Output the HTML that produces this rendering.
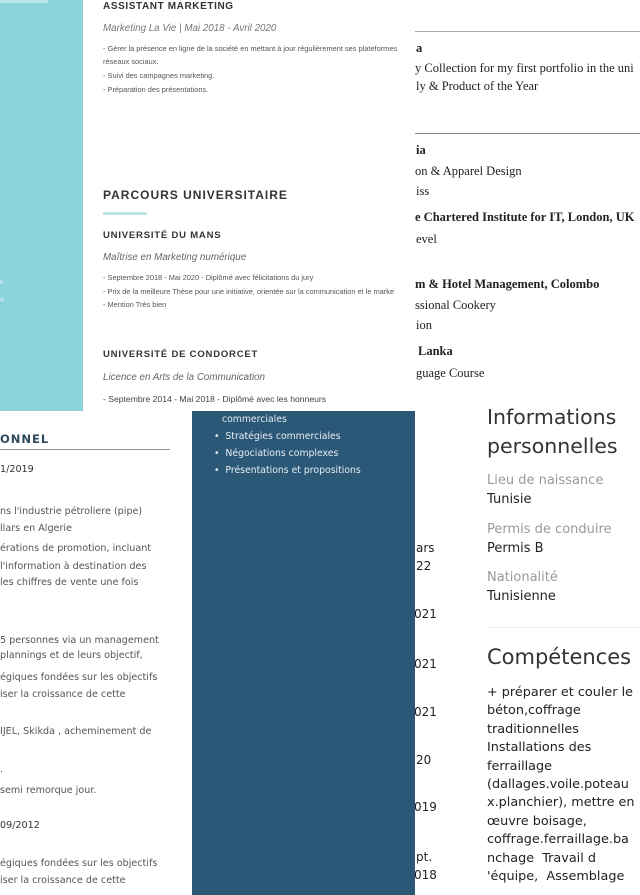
<!DOCTYPE html>
<html><head><meta charset="utf-8"><style>
*{margin:0;padding:0;box-sizing:border-box}
body{width:640px;height:895px;position:relative;overflow:hidden;background:#fff;font-family:"Liberation Sans","DejaVu Sans",sans-serif}
.t{position:absolute;white-space:nowrap;line-height:1}
.b{font-weight:bold}
.s{font-family:"Liberation Serif",serif;color:#222;font-size:12.5px}
.g{color:#555;font-size:7.4px}
.p{color:#555;font-family:"DejaVu Sans",sans-serif;font-size:9.6px}
.r{font-family:"DejaVu Sans",sans-serif}
.w{color:#e4edf3;font-size:9.3px;font-family:"DejaVu Sans",sans-serif}
</style></head><body>
<div style="position:absolute;left:0;top:0;width:83px;height:411px;background:#8cd4da"></div>
<div style="position:absolute;left:0;top:0;width:48px;height:3px;background:#b6e6ea"></div>
<div class="t" style="left:0;top:280px;font-size:6px;color:#eef">n</div>
<div class="t" style="left:0;top:297px;font-size:6px;color:#eef">a</div>

<div class="t b" style="left:103px;top:2px;font-size:10px;color:#333;letter-spacing:.6px">ASSISTANT MARKETING</div>
<div class="t" style="left:103px;top:24px;font-size:9.8px;color:#777;font-style:italic">Marketing La Vie | Mai 2018 - Avril 2020</div>
<div class="t g" style="left:103px;top:45px">- Gérer la présence en ligne de la société en mettant à jour régulièrement ses plateformes</div>
<div class="t g" style="left:103px;top:58px">réseaux sociaux.</div>
<div class="t g" style="left:103px;top:72px">- Suivi des campagnes marketing.</div>
<div class="t g" style="left:103px;top:86px">- Préparation des présentations.</div>
<div class="t b" style="left:103px;top:189px;font-size:12px;color:#333;letter-spacing:1px">PARCOURS UNIVERSITAIRE</div>
<div style="position:absolute;left:103px;top:212px;width:44px;height:3px;background:#bfe5e7"></div>
<div class="t b" style="left:103px;top:231px;font-size:9.5px;color:#333;letter-spacing:.8px">UNIVERSITÉ DU MANS</div>
<div class="t" style="left:103px;top:253px;font-size:9.8px;color:#666;font-style:italic">Maîtrise en Marketing numérique</div>
<div class="t g" style="left:103px;top:274px">- Septembre 2018 - Mai 2020 - Diplômé avec félicitations du jury</div>
<div class="t g" style="left:103px;top:288px">- Prix de la meilleure Thèse pour une initiative, orientée sur la communication et le marke</div>
<div class="t g" style="left:103px;top:301px">- Mention Très bien</div>
<div class="t b" style="left:103px;top:350px;font-size:9.5px;color:#333;letter-spacing:.8px">UNIVERSITÉ DE CONDORCET</div>
<div class="t" style="left:103px;top:373px;font-size:9.8px;color:#666;font-style:italic">Licence en Arts de la Communication</div>
<div class="t" style="left:103px;top:395px;font-size:8.6px;color:#444">- Septembre 2014 - Mai 2018 - Diplômé avec les honneurs</div>

<div style="position:absolute;left:415px;top:0;width:225px;height:411px;overflow:hidden">
<div style="position:absolute;left:0;top:31px;width:225px;height:1px;background:#aaa"></div>
<div style="position:absolute;left:0;top:133px;width:225px;height:1px;background:#888"></div>
<div class="t s b" style="left:1px;top:42px">a</div>
<div class="t s" style="left:0;top:62px">y Collection for my first portfolio in the uni</div>
<div class="t s" style="left:1px;top:80px">ly &amp; Product of the Year</div>
<div class="t s b" style="left:1px;top:144px">ia</div>
<div class="t s" style="left:0;top:165px">on &amp; Apparel Design</div>
<div class="t s" style="left:1px;top:185px">iss</div>
<div class="t s b" style="left:0;top:211px">e Chartered Institute for IT, London, UK</div>
<div class="t s" style="left:1px;top:233px">evel</div>
<div class="t s b" style="left:0;top:278px">m &amp; Hotel Management, Colombo</div>
<div class="t s" style="left:0;top:299px">ssional Cookery</div>
<div class="t s" style="left:1px;top:319px">ion</div>
<div class="t s b" style="left:3px;top:345px">Lanka</div>
<div class="t s" style="left:1px;top:367px">guage Course</div>
</div>

<div class="t b r" style="left:0;top:434px;font-size:11.5px;color:#2c4a5e;letter-spacing:1px">ONNEL</div>
<div style="position:absolute;left:0;top:449px;width:170px;height:1px;background:#8a96a0"></div>
<div class="t p" style="left:0;top:465px;color:#333">1/2019</div>
<div class="t p" style="left:0;top:507px">ns l'industrie pétroliere (pipe)</div>
<div class="t p" style="left:0;top:524px">llars en Algerie</div>
<div class="t p" style="left:0;top:544px">érations de promotion, incluant</div>
<div class="t p" style="left:0;top:562px">l'information à destination des</div>
<div class="t p" style="left:0;top:578px">les chiffres de vente une fois</div>
<div class="t p" style="left:0;top:636px">5 personnes via un management</div>
<div class="t p" style="left:0;top:651px"> plannings et de leurs objectif,</div>
<div class="t p" style="left:0;top:673px">égiques fondées sur les objectifs</div>
<div class="t p" style="left:0;top:690px">iser la croissance de cette</div>
<div class="t p" style="left:0;top:727px">IJEL, Skikda , acheminement de</div>
<div class="t p" style="left:0;top:765px">.</div>
<div class="t p" style="left:0;top:786px">semi remorque jour.</div>
<div class="t p" style="left:0;top:821px;color:#333">09/2012</div>
<div class="t p" style="left:0;top:859px">égiques fondées sur les objectifs</div>
<div class="t p" style="left:0;top:876px">iser la croissance de cette</div>

<div style="position:absolute;left:192px;top:411px;width:223px;height:484px;background:#2c5877"></div>
<div class="t w" style="left:222px;top:415px">commerciales</div>
<div class="t w" style="left:214px;top:432px">•&nbsp; Stratégies commerciales</div>
<div class="t w" style="left:214px;top:449px">•&nbsp; Négociations complexes</div>
<div class="t w" style="left:214px;top:466px">•&nbsp; Présentations et propositions</div>

<div class="t r" style="left:416px;top:542px;font-size:12px;color:#222">ars</div>
<div class="t r" style="left:416px;top:560px;font-size:12px;color:#222">22</div>
<div class="t r" style="left:414px;top:608px;font-size:12px;color:#222">021</div>
<div class="t r" style="left:414px;top:658px;font-size:12px;color:#222">021</div>
<div class="t r" style="left:414px;top:706px;font-size:12px;color:#222">021</div>
<div class="t r" style="left:416px;top:754px;font-size:12px;color:#222">20</div>
<div class="t r" style="left:414px;top:801px;font-size:12px;color:#222">019</div>
<div class="t r" style="left:416px;top:851px;font-size:12px;color:#222">pt.</div>
<div class="t r" style="left:414px;top:869px;font-size:12px;color:#222">018</div>

<div class="t r" style="left:487px;top:407px;font-size:20.5px;color:#333">Informations</div>
<div class="t r" style="left:487px;top:436px;font-size:20.5px;color:#333">personnelles</div>
<div class="t r" style="left:487px;top:474px;font-size:13px;color:#999">Lieu de naissance</div>
<div class="t r" style="left:487px;top:493px;font-size:13px;color:#222">Tunisie</div>
<div class="t r" style="left:487px;top:523px;font-size:13px;color:#999">Permis de conduire</div>
<div class="t r" style="left:487px;top:542px;font-size:13px;color:#222">Permis B</div>
<div class="t r" style="left:487px;top:571px;font-size:13px;color:#999">Nationalité</div>
<div class="t r" style="left:487px;top:590px;font-size:13px;color:#222">Tunisienne</div>
<div style="position:absolute;left:487px;top:627px;width:153px;height:1px;background:#eee"></div>
<div class="t r" style="left:487px;top:647px;font-size:21px;color:#333">Compétences</div>
<div class="r" style="position:absolute;left:487px;top:684px;width:160px;font-size:12.8px;line-height:18.4px;color:#222;white-space:pre">+ préparer et couler le
béton,coffrage
traditionnelles
Installations des
ferraillage
(dallages.voile.poteau
x.planchier), mettre en
œuvre boisage,
coffrage.ferraillage.ba
nchage  Travail d
'équipe,  Assemblage</div>
</body></html>
